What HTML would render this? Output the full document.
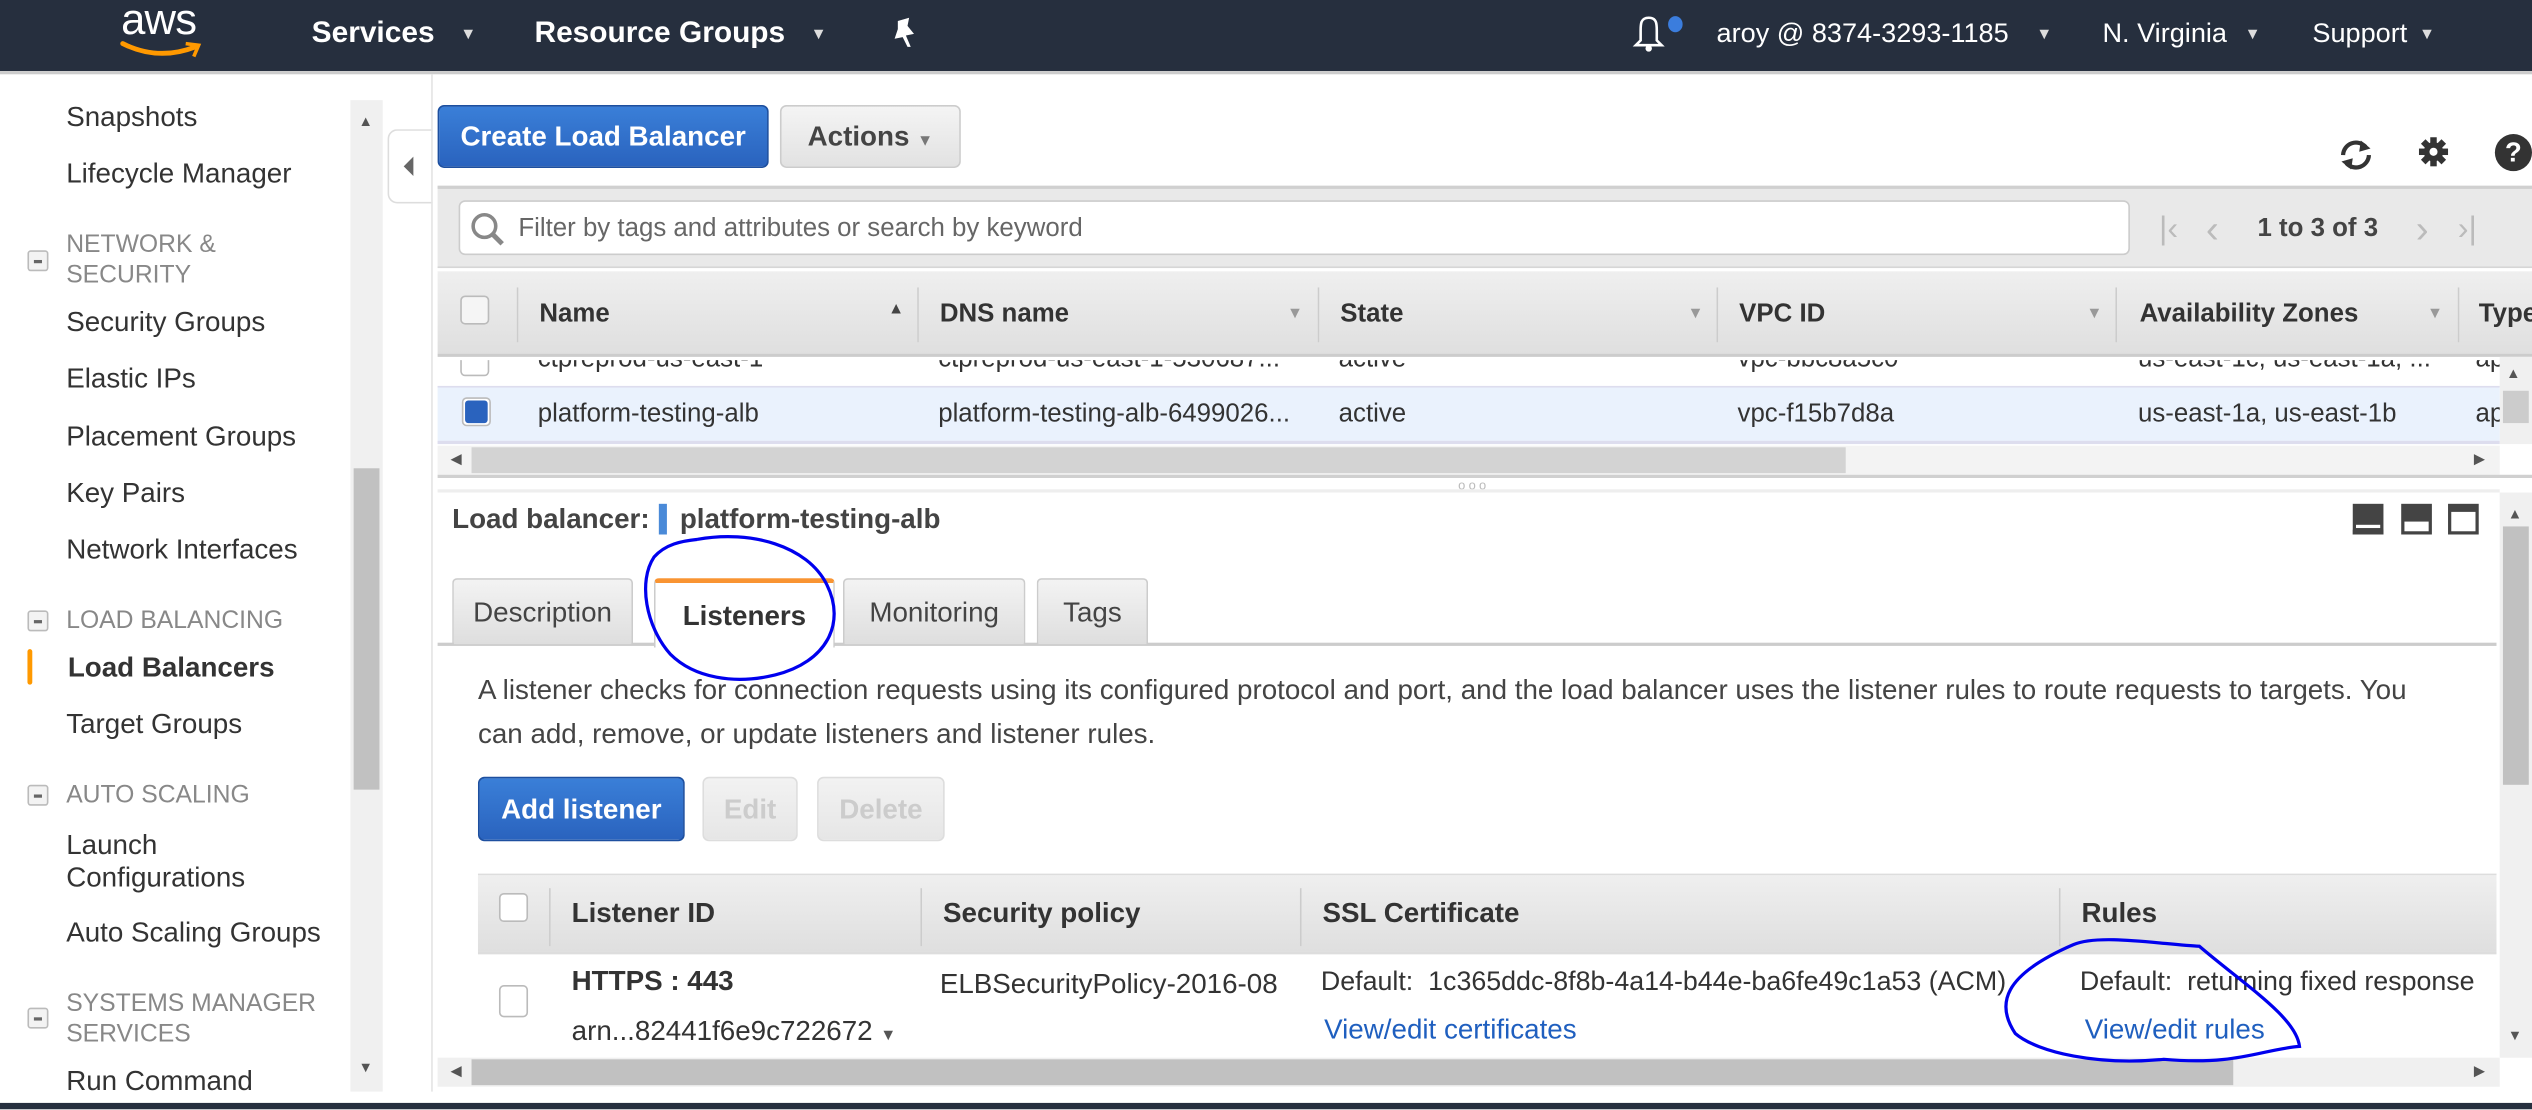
<!DOCTYPE html>
<html><head><meta charset="utf-8"><style>
*{margin:0;padding:0;box-sizing:border-box}
html,body{width:2532px;height:1110px;overflow:hidden;background:#fff}
#s{position:absolute;left:0;top:0;width:1568px;height:687px;transform:scale(1.61480);transform-origin:0 0;font-family:"Liberation Sans",Arial,sans-serif;color:#333;overflow:hidden;background:#fff}
.a{position:absolute;white-space:nowrap}
.t{font-size:16px;line-height:18px}
.u{font-size:17.2px;line-height:19px}
.hd{color:#fff;font-size:18.5px;font-weight:bold}
.hs{color:#fff;font-size:16.8px}
.car{font-size:10px;color:#ddd}
.sec{color:#888;font-size:15.3px;line-height:19px}
.mb{position:absolute;left:17px;width:13px;height:13px;border:1px solid #bbb;border-radius:2px;background:#f3f3f3}
.mb:after{content:"";position:absolute;left:3px;top:5px;width:5px;height:2px;background:#666}
.btnb{position:absolute;border:1px solid #1d4f9f;border-radius:4px;background:linear-gradient(#3a7fd8,#2a63be);color:#fff;font-weight:bold;font-size:17.2px;text-align:center}
.btng{position:absolute;border:1px solid #ccc;border-radius:4px;background:linear-gradient(#f4f4f4,#e2e2e2);font-weight:bold;font-size:17.2px;text-align:center}
.th{position:absolute;background:linear-gradient(#efefef,#dfdfdf)}
.sep{position:absolute;width:1px;background:#fafafa;border-left:1px solid #ccc}
.cb{position:absolute;width:18px;height:18px;border:1px solid #bbb;border-radius:3px;background:#fff}
.b{font-weight:bold}
.tab{position:absolute;top:358px;height:41px;border:1px solid #ccc;border-bottom:none;border-radius:3px 3px 0 0;background:linear-gradient(#f3f3f3,#dedede);font-size:17.2px;line-height:40px;text-align:center;color:#444}
.arr{position:absolute;font-size:9px;color:#555}
.dv{color:#999;font-size:10px}
</style></head><body><div id="s">
<!-- header -->
<div class="a" style="left:0;top:0;width:1568px;height:44px;background:#262f3e"></div>
<div class="a" style="left:0;top:44px;width:1568px;height:2px;background:#ccc"></div>
<div class="a" style="left:75px;top:-3px;color:#fff;font-size:27px;letter-spacing:-0.5px">aws</div>
<svg class="a" style="left:73px;top:24px" width="56" height="14"><path d="M3 3 Q25 14 48 5" stroke="#f90" stroke-width="3" fill="none" stroke-linecap="round"/><path d="M42 3 L50 4 L47 11" stroke="#f90" stroke-width="2.2" fill="none"/></svg>
<div class="a hd" style="left:193px;top:9px">Services</div><div class="a car" style="left:285px;top:16px">&#9660;</div>
<div class="a hd" style="left:331px;top:9px">Resource Groups</div><div class="a car" style="left:502px;top:16px">&#9660;</div>
<svg class="a" style="left:551px;top:10px" width="18" height="22"><path d="M5 3 L12 1 L11 6 L15 11 L10 12 L13 19 L11 19 L8 13 L3 14 L5 8 Z" fill="#fff"/></svg>
<svg class="a" style="left:1011px;top:9px" width="20" height="24"><path d="M10 2 C5 2 5 6 5 10 L5 16 L2 19 L18 19 L15 16 L15 10 C15 6 15 2 10 2 Z" stroke="#fff" stroke-width="1.6" fill="none"/><circle cx="10" cy="21" r="2" fill="#fff"/></svg>
<div class="a" style="left:1033px;top:10px;width:9px;height:10px;border-radius:50%;background:#3b7ddd"></div>
<div class="a hs" style="left:1063px;top:11px">aroy @ 8374-3293-1185</div><div class="a car" style="left:1261px;top:16px">&#9660;</div>
<div class="a hs" style="left:1302px;top:11px">N. Virginia</div><div class="a car" style="left:1390px;top:16px">&#9660;</div>
<div class="a hs" style="left:1432px;top:11px">Support</div><div class="a car" style="left:1498px;top:16px">&#9660;</div>

<!-- sidebar -->
<div class="a u" style="left:41px;top:63px">Snapshots</div>
<div class="a u" style="left:41px;top:98px">Lifecycle Manager</div>
<div class="mb" style="top:155px"></div>
<div class="a sec" style="left:41px;top:142px">NETWORK &amp;<br>SECURITY</div>
<div class="a u" style="left:41px;top:190px">Security Groups</div>
<div class="a u" style="left:41px;top:225px">Elastic IPs</div>
<div class="a u" style="left:41px;top:261px">Placement Groups</div>
<div class="a u" style="left:41px;top:296px">Key Pairs</div>
<div class="a u" style="left:41px;top:331px">Network Interfaces</div>
<div class="mb" style="top:378px"></div>
<div class="a sec" style="left:41px;top:375px">LOAD BALANCING</div>
<div class="a" style="left:17px;top:402px;width:3px;height:22px;background:#f90;border-radius:2px"></div>
<div class="a u b" style="left:42px;top:404px">Load Balancers</div>
<div class="a u" style="left:41px;top:439px">Target Groups</div>
<div class="mb" style="top:486px"></div>
<div class="a sec" style="left:41px;top:483px">AUTO SCALING</div>
<div class="a u" style="left:41px;top:513px;line-height:20px">Launch<br>Configurations</div>
<div class="a u" style="left:41px;top:568px">Auto Scaling Groups</div>
<div class="mb" style="top:624px"></div>
<div class="a sec" style="left:41px;top:612px">SYSTEMS MANAGER<br>SERVICES</div>
<div class="a u" style="left:41px;top:660px">Run Command</div>
<div class="a" style="left:217px;top:62px;width:20px;height:614px;background:#f0f0f0"></div>
<div class="a" style="left:219px;top:290px;width:16px;height:199px;background:#c1c1c1"></div>
<div class="arr" style="left:222px;top:70px">&#9650;</div>
<div class="arr" style="left:222px;top:656px">&#9660;</div>
<div class="a" style="left:240px;top:80px;width:28px;height:46px;border:1px solid #ddd;border-right:none;border-radius:6px 0 0 6px;background:#fff"></div>
<div class="a" style="left:250px;top:97px;width:0;height:0;border-top:6px solid transparent;border-bottom:6px solid transparent;border-right:6px solid #666"></div>
<div class="a" style="left:267px;top:46px;width:1px;height:630px;background:#e4e4e4"></div>

<!-- toolbar -->
<div class="btnb" style="left:271px;top:65px;width:205px;height:39px;line-height:37px">Create Load Balancer</div>
<div class="btng" style="left:483px;top:65px;width:112px;height:39px;line-height:37px;color:#444">Actions <span style="font-size:10px;color:#777">&#9660;</span></div>
<svg class="a" style="left:1446px;top:84px" width="26" height="24"><path d="M5 12 A8 8 0 0 1 19 7" stroke="#333" stroke-width="2.6" fill="none"/><path d="M21 12 A8 8 0 0 1 7 17" stroke="#333" stroke-width="2.6" fill="none"/><path d="M16 3 L22 8 L15 10 Z" fill="#333"/><path d="M10 21 L4 16 L11 14 Z" fill="#333"/></svg>
<svg class="a" style="left:1497px;top:84px" width="20" height="20"><g fill="#333"><circle cx="10" cy="10" r="6"/><rect x="8" y="1" width="4" height="18"/><rect x="1" y="8" width="18" height="4"/><rect x="8" y="1" width="4" height="18" transform="rotate(45 10 10)"/><rect x="8" y="1" width="4" height="18" transform="rotate(-45 10 10)"/></g><circle cx="10" cy="10" r="2.5" fill="#fff"/></svg>
<div class="a" style="left:1545px;top:83px;width:23px;height:23px;border-radius:50%;background:#333;color:#fff;font-weight:bold;font-size:17px;text-align:center;line-height:23px">?</div>

<!-- filter bar -->
<div class="a" style="left:271px;top:115px;width:1297px;height:51px;background:#e9e9e9;border-top:2px solid #d0d0d0;border-bottom:1px solid #d6d6d6"></div>
<div class="a" style="left:284px;top:124px;width:1035px;height:34px;background:#fff;border:1px solid #ccc;border-radius:4px"></div>
<svg class="a" style="left:290px;top:131px" width="26" height="24"><circle cx="10" cy="9" r="7" stroke="#888" stroke-width="2.2" fill="none"/><path d="M15 14 L21 20" stroke="#888" stroke-width="3"/></svg>
<div class="a t" style="left:321px;top:133px;color:#666">Filter by tags and attributes or search by keyword</div>
<div class="a" style="left:1337px;top:131px;font-size:20px;color:#bbb">|&#8249;</div>
<div class="a" style="left:1366px;top:129px;font-size:24px;color:#bbb">&#8249;</div>
<div class="a t" style="left:1398px;top:133px;color:#444;font-weight:bold">1 to 3 of 3</div>
<div class="a" style="left:1496px;top:129px;font-size:24px;color:#bbb">&#8250;</div>
<div class="a" style="left:1522px;top:131px;font-size:20px;color:#bbb">&#8250;|</div>

<!-- table -->
<div class="th" style="left:271px;top:168px;width:1297px;height:53px;border-bottom:2px solid #ccc"></div>
<div class="cb" style="left:285px;top:183px;background:#f5f5f5"></div>
<div class="sep" style="left:320px;top:178px;height:34px"></div>
<div class="sep" style="left:568px;top:178px;height:34px"></div>
<div class="sep" style="left:816px;top:178px;height:34px"></div>
<div class="sep" style="left:1063px;top:178px;height:34px"></div>
<div class="sep" style="left:1310px;top:178px;height:34px"></div>
<div class="sep" style="left:1522px;top:178px;height:34px"></div>
<div class="a t b" style="left:334px;top:186px">Name</div><div class="a" style="left:550px;top:186px;font-size:10px;color:#444">&#9650;</div>
<div class="a t b" style="left:582px;top:186px">DNS name</div><div class="a dv" style="left:797px;top:189px">&#9660;</div>
<div class="a t b" style="left:830px;top:186px">State</div><div class="a dv" style="left:1045px;top:189px">&#9660;</div>
<div class="a t b" style="left:1077px;top:186px">VPC ID</div><div class="a dv" style="left:1292px;top:189px">&#9660;</div>
<div class="a t b" style="left:1325px;top:186px">Availability Zones</div><div class="a dv" style="left:1503px;top:189px">&#9660;</div>
<div class="a t b" style="left:1535px;top:186px">Type</div>
<div class="a" style="left:271px;top:223px;width:1277px;height:17px;overflow:hidden">
 <div class="cb" style="left:14px;top:-8px"></div>
 <div class="a t" style="left:62px;top:-9px">ctpreprod-us-east-1</div>
 <div class="a t" style="left:310px;top:-9px">ctpreprod-us-east-1-530687...</div>
 <div class="a t" style="left:558px;top:-9px">active</div>
 <div class="a t" style="left:805px;top:-9px">vpc-bbc8a5c0</div>
 <div class="a t" style="left:1053px;top:-9px">us-east-1c, us-east-1a, ...</div>
 <div class="a t" style="left:1262px;top:-9px">appli</div>
</div>
<div class="a" style="left:271px;top:239px;width:1277px;height:36px;background:#eaf2fd;border-top:1px solid #dde;border-bottom:2px solid #dde"></div>
<div class="cb" style="left:286px;top:246px;padding:1px;background:#fff"><div style="width:14px;height:14px;background:#2a63be;border-radius:2px"></div></div>
<div class="a t" style="left:333px;top:248px">platform-testing-alb</div>
<div class="a t" style="left:581px;top:248px">platform-testing-alb-6499026...</div>
<div class="a t" style="left:829px;top:248px">active</div>
<div class="a t" style="left:1076px;top:248px">vpc-f15b7d8a</div>
<div class="a t" style="left:1324px;top:248px">us-east-1a, us-east-1b</div>
<div class="a t" style="left:1533px;top:248px">appli</div>
<div class="a" style="left:1548px;top:221px;width:20px;height:54px;background:#f0f0f0"></div>
<div class="a" style="left:1550px;top:242px;width:16px;height:20px;background:#ccc"></div>
<div class="arr" style="left:1552px;top:226px">&#9650;</div>
<div class="a" style="left:271px;top:276px;width:1277px;height:18px;background:#f3f3f3"></div>
<div class="a" style="left:292px;top:277px;width:851px;height:16px;background:#d3d3d3"></div>
<div class="arr" style="left:279px;top:279px">&#9664;</div>
<div class="arr" style="left:1532px;top:279px">&#9654;</div>
<div class="a" style="left:271px;top:294px;width:1297px;height:2px;background:#d0d0d0"></div>
<div class="a" style="left:903px;top:296px;font-size:8px;color:#bbb;letter-spacing:2px">ooo</div>
<div class="a" style="left:271px;top:303px;width:1277px;height:2px;background:#eee"></div>

<!-- details -->
<div class="a u b" style="left:280px;top:312px;color:#444">Load balancer:</div>
<div class="a" style="left:408px;top:312px;width:5px;height:19px;background:#4a8ad8"></div>
<div class="a u b" style="left:421px;top:312px;color:#444">platform-testing-alb</div>
<div class="a" style="left:1457px;top:312px;width:19px;height:19px;background:#444;border-bottom:3px solid #444"><div style="position:absolute;left:2px;bottom:1px;width:15px;height:2px;background:#fff"></div></div>
<div class="a" style="left:1487px;top:312px;width:19px;height:19px;background:#444"><div style="position:absolute;left:2px;bottom:2px;width:15px;height:6px;background:#fff"></div></div>
<div class="a" style="left:1516px;top:312px;width:19px;height:19px;background:#444"><div style="position:absolute;left:2px;bottom:2px;width:15px;height:12px;background:#fff"></div></div>
<div class="a" style="left:1548px;top:305px;width:20px;height:350px;background:#f0f0f0"></div>
<div class="a" style="left:1550px;top:326px;width:16px;height:160px;background:#c1c1c1"></div>
<div class="arr" style="left:1553px;top:313px">&#9650;</div>
<div class="arr" style="left:1553px;top:636px">&#9660;</div>

<div class="a" style="left:271px;top:398px;width:1275px;height:2px;background:#ccc"></div>
<div class="tab" style="left:280px;width:112px">Description</div>
<div class="tab" style="left:405px;width:112px;background:#fff;border-top:3px solid #f99432;height:43px;font-weight:bold;color:#333">Listeners</div>
<div class="tab" style="left:522px;width:113px">Monitoring</div>
<div class="tab" style="left:642px;width:69px">Tags</div>
<div class="a u" style="left:296px;top:414px;color:#444;line-height:27px">A listener checks for connection requests using its configured protocol and port, and the load balancer uses the listener rules to route requests to targets. You<br>can add, remove, or update listeners and listener rules.</div>
<div class="btnb" style="left:296px;top:481px;width:128px;height:40px;line-height:38px">Add listener</div>
<div class="btng" style="left:435px;top:481px;width:59px;height:40px;line-height:38px;color:#ccc;border-color:#ddd;background:linear-gradient(#f2f2f2,#e6e6e6)">Edit</div>
<div class="btng" style="left:506px;top:481px;width:79px;height:40px;line-height:38px;color:#ccc;border-color:#ddd;background:linear-gradient(#f2f2f2,#e6e6e6)">Delete</div>

<div class="th" style="left:296px;top:541px;width:1250px;height:50px;border-top:1px solid #ddd;border-bottom:2px solid #ddd"></div>
<div class="cb" style="left:309px;top:553px"></div>
<div class="sep" style="left:340px;top:550px;height:36px"></div>
<div class="sep" style="left:570px;top:550px;height:36px"></div>
<div class="sep" style="left:805px;top:550px;height:36px"></div>
<div class="sep" style="left:1275px;top:550px;height:36px"></div>
<div class="a u b" style="left:354px;top:556px">Listener ID</div>
<div class="a u b" style="left:584px;top:556px">Security policy</div>
<div class="a u b" style="left:819px;top:556px">SSL Certificate</div>
<div class="a u b" style="left:1289px;top:556px">Rules</div>
<div class="cb" style="left:309px;top:610px;height:20px"></div>
<div class="a u b" style="left:354px;top:598px">HTTPS : 443</div>
<div class="a u" style="left:354px;top:629px">arn...82441f6e9c722672 <span style="font-size:10px;color:#555">&#9660;</span></div>
<div class="a u" style="left:582px;top:600px">ELBSecurityPolicy-2016-08</div>
<div class="a" style="left:818px;top:598px;font-size:16.6px;line-height:19px">Default: &nbsp;1c365ddc-8f8b-4a14-b44e-ba6fe49c1a53 (ACM)</div>
<div class="a u" style="left:820px;top:628px;color:#1f5fbf">View/edit certificates</div>
<div class="a" style="left:1288px;top:598px;font-size:16.6px;line-height:19px">Default: &nbsp;returning fixed response</div>
<div class="a u" style="left:1291px;top:628px;color:#1f5fbf">View/edit rules</div>
<div class="a" style="left:271px;top:655px;width:1277px;height:18px;background:#f0f0f0"></div>
<div class="a" style="left:292px;top:656px;width:1091px;height:16px;background:#c1c1c1"></div>
<div class="arr" style="left:279px;top:658px">&#9664;</div>
<div class="arr" style="left:1532px;top:658px">&#9654;</div>
<div class="a" style="left:0;top:683px;width:1568px;height:4px;background:#262f3e"></div>

<svg class="a" style="left:0;top:0" width="1568" height="687">
<path d="M432 334 C465 328 500 338 512 362 C524 386 512 410 480 418 C455 424 430 420 415 405 C400 388 395 360 405 345 C412 337 422 335 432 334" stroke="#0000ee" stroke-width="2" fill="none"/>
<path d="M1284 585 C1300 578 1340 585 1362 586 C1390 610 1422 630 1424 648 C1400 650 1385 660 1340 656 C1300 660 1262 652 1248 640 C1236 622 1240 604 1284 585" stroke="#0000ee" stroke-width="2" fill="none"/>
</svg>
</div></body></html>
